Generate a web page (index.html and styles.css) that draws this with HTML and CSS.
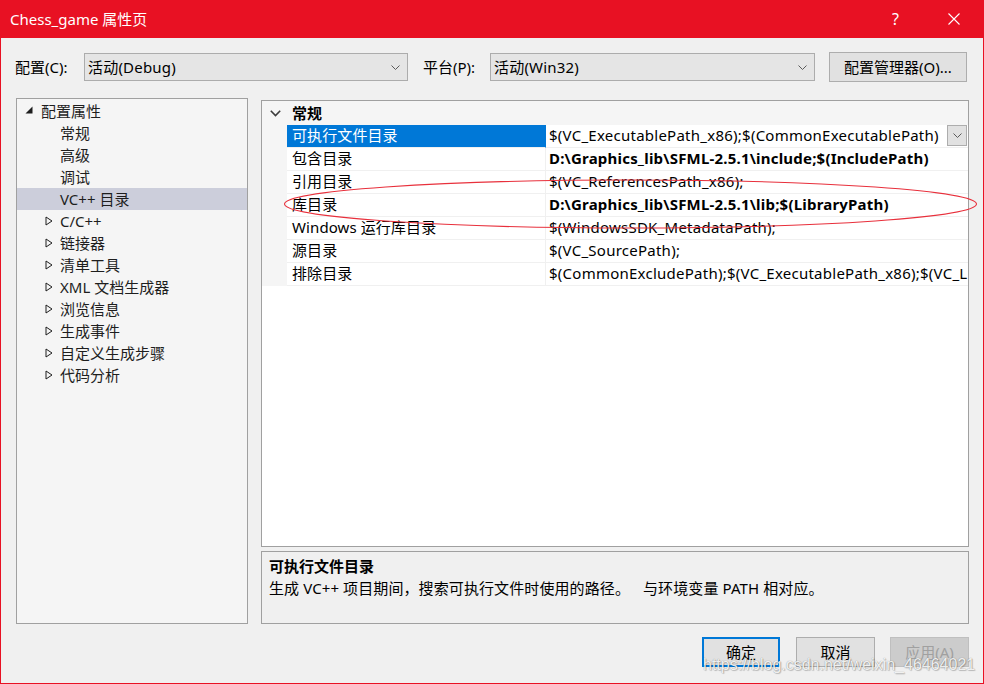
FILE: index.html
```html
<!DOCTYPE html>
<html lang="zh-CN">
<head>
<meta charset="utf-8">
<title>Chess_game 属性页</title>
<link rel="stylesheet" href="styles.css">
</head>
<body>
<div class="window">
  <div class="titlebar">
    <span class="title">Chess_game 属性页</span>
    <span class="help">?</span>
    <svg class="close" width="12" height="12" viewBox="0 0 12 12"><path d="M0.5 0.5L11.5 11.5M11.5 0.5L0.5 11.5" stroke="#ffffff" stroke-width="1.1" fill="none"/></svg>
  </div>

  <div class="config-row">
    <span class="lbl lbl-config">配置(C):</span>
    <div class="combo combo-config">
      <span class="combo-text">活动(Debug)</span>
      <svg class="chev" width="9" height="5" viewBox="0 0 9 5"><path d="M0.5 0.5L4.5 4.5L8.5 0.5" stroke="#5a5a5a" stroke-width="1" fill="none"/></svg>
    </div>
    <span class="lbl lbl-platform">平台(P):</span>
    <div class="combo combo-platform">
      <span class="combo-text">活动(Win32)</span>
      <svg class="chev" width="9" height="5" viewBox="0 0 9 5"><path d="M0.5 0.5L4.5 4.5L8.5 0.5" stroke="#5a5a5a" stroke-width="1" fill="none"/></svg>
    </div>
    <button class="btn btn-manager">配置管理器(O)...</button>
  </div>

  <div class="main">
    <div class="tree">
      <div class="tree-row root">
        <svg class="tri-open" width="8" height="8" viewBox="0 0 8 8"><polygon points="7.5,0.5 7.5,7.5 0.5,7.5" fill="#1e1e1e"/></svg>
        <span>配置属性</span>
      </div>
      <div class="tree-row child">常规</div>
      <div class="tree-row child">高级</div>
      <div class="tree-row child">调试</div>
      <div class="tree-row child selected">VC++ 目录</div>
      <div class="tree-row node"><svg class="tri" width="8" height="10" viewBox="0 0 8 10"><polygon points="1,1 1,9 7,5" fill="none" stroke="#1e1e1e" stroke-width="1"/></svg><span>C/C++</span></div>
      <div class="tree-row node"><svg class="tri" width="8" height="10" viewBox="0 0 8 10"><polygon points="1,1 1,9 7,5" fill="none" stroke="#1e1e1e" stroke-width="1"/></svg><span>链接器</span></div>
      <div class="tree-row node"><svg class="tri" width="8" height="10" viewBox="0 0 8 10"><polygon points="1,1 1,9 7,5" fill="none" stroke="#1e1e1e" stroke-width="1"/></svg><span>清单工具</span></div>
      <div class="tree-row node"><svg class="tri" width="8" height="10" viewBox="0 0 8 10"><polygon points="1,1 1,9 7,5" fill="none" stroke="#1e1e1e" stroke-width="1"/></svg><span>XML 文档生成器</span></div>
      <div class="tree-row node"><svg class="tri" width="8" height="10" viewBox="0 0 8 10"><polygon points="1,1 1,9 7,5" fill="none" stroke="#1e1e1e" stroke-width="1"/></svg><span>浏览信息</span></div>
      <div class="tree-row node"><svg class="tri" width="8" height="10" viewBox="0 0 8 10"><polygon points="1,1 1,9 7,5" fill="none" stroke="#1e1e1e" stroke-width="1"/></svg><span>生成事件</span></div>
      <div class="tree-row node"><svg class="tri" width="8" height="10" viewBox="0 0 8 10"><polygon points="1,1 1,9 7,5" fill="none" stroke="#1e1e1e" stroke-width="1"/></svg><span>自定义生成步骤</span></div>
      <div class="tree-row node"><svg class="tri" width="8" height="10" viewBox="0 0 8 10"><polygon points="1,1 1,9 7,5" fill="none" stroke="#1e1e1e" stroke-width="1"/></svg><span>代码分析</span></div>
    </div>

    <div class="right">
      <div class="grid">
        <div class="grid-head">
          <div class="gutter"><svg class="head-chev" width="11" height="7" viewBox="0 0 11 7"><path d="M0.8 0.8L5.5 5.5L10.2 0.8" stroke="#3c3c3c" stroke-width="1.6" fill="none"/></svg></div>
          <div class="head-text">常规</div>
        </div>
        <div class="grid-row">
          <div class="gutter"></div>
          <div class="cell-name sel">可执行文件目录</div>
          <div class="cell-val"><span class="val-text">$(VC_ExecutablePath_x86);$(CommonExecutablePath)</span>
            <div class="drop"><svg width="9" height="5" viewBox="0 0 9 5"><path d="M0.5 0.5L4.5 4.5L8.5 0.5" stroke="#5a5a5a" stroke-width="1" fill="none"/></svg></div>
          </div>
        </div>
        <div class="grid-row">
          <div class="gutter"></div>
          <div class="cell-name">包含目录</div>
          <div class="cell-val bold"><span class="val-text">D:\Graphics_lib\SFML-2.5.1\include;$(IncludePath)</span></div>
        </div>
        <div class="grid-row">
          <div class="gutter"></div>
          <div class="cell-name">引用目录</div>
          <div class="cell-val"><span class="val-text">$(VC_ReferencesPath_x86);</span></div>
        </div>
        <div class="grid-row">
          <div class="gutter"></div>
          <div class="cell-name">库目录</div>
          <div class="cell-val bold"><span class="val-text">D:\Graphics_lib\SFML-2.5.1\lib;$(LibraryPath)</span></div>
        </div>
        <div class="grid-row">
          <div class="gutter"></div>
          <div class="cell-name">Windows 运行库目录</div>
          <div class="cell-val"><span class="val-text">$(WindowsSDK_MetadataPath);</span></div>
        </div>
        <div class="grid-row">
          <div class="gutter"></div>
          <div class="cell-name">源目录</div>
          <div class="cell-val"><span class="val-text">$(VC_SourcePath);</span></div>
        </div>
        <div class="grid-row">
          <div class="gutter"></div>
          <div class="cell-name">排除目录</div>
          <div class="cell-val"><span class="val-text">$(CommonExcludePath);$(VC_ExecutablePath_x86);$(VC_LibraryPath_x86)</span></div>
        </div>
      </div>
      <div class="desc">
        <div class="desc-title">可执行文件目录</div>
        <div class="desc-text">生成 VC++ 项目期间，搜索可执行文件时使用的路径。<span class="gap"></span>与环境变量 PATH 相对应。</div>
      </div>
    </div>
  </div>

  <div class="buttons">
    <button class="btn btn-ok">确定</button>
    <button class="btn btn-cancel">取消</button>
    <button class="btn btn-apply" disabled>应用(A)</button>
  </div>

  <svg class="annotation" width="984" height="684" viewBox="0 0 984 684"><ellipse cx="630.5" cy="204" rx="346" ry="24" fill="none" stroke="#e8303c" stroke-width="1.1"/></svg>
  <div class="watermark">https://blog.csdn.net/weixin_46464021</div>
</div>
</body>
</html>
```

FILE: styles.css
```css
* { box-sizing: border-box; }

html, body {
  margin: 0;
  padding: 0;
  width: 984px;
  height: 684px;
  overflow: hidden;
  background: #f0f0f0;
}

body {
  font-family: "Noto Sans", "Noto Sans CJK SC", sans-serif;
  font-size: 15px;
  color: #000;
}

.window {
  position: relative;
  width: 984px;
  height: 684px;
  border: 1px solid #e81123;
  border-top: none;
  background: #f0f0f0;
  display: flex;
  flex-direction: column;
}

/* title bar */
.titlebar {
  height: 38px;
  flex: none;
  background: #e81123;
  color: #fff;
  display: flex;
  align-items: center;
  padding-left: 9px;
  padding-right: 23px;
}
.title {
  font-size: 15px;
  line-height: 20px;
}
.help {
  margin-left: auto;
  font-size: 16px;
  line-height: 20px;
}
.close {
  margin-left: 49px;
  display: block;
}

/* configuration row */
.config-row {
  margin-top: 14px;
  height: 30px;
  flex: none;
  display: flex;
  align-items: center;
  padding-left: 14px;
}
.lbl {
  line-height: 20px;
  white-space: nowrap;
}
.lbl-config { width: 69px; }
.lbl-platform { width: 67px; margin-left: 15px; }
.combo {
  height: 28px;
  border: 1px solid #acacac;
  background: #e5e5e5;
  display: flex;
  align-items: center;
  padding-left: 3px;
  padding-right: 7px;
}
.combo-config { width: 324px; }
.combo-platform { width: 325px; }
.combo-text { line-height: 20px; letter-spacing: 0.2px; }
.chev { margin-left: auto; display: block; }

.btn {
  font-family: inherit;
  font-size: 15px;
  color: #000;
  background: #e1e1e1;
  border: 1px solid #adadad;
  height: 30px;
  padding: 0;
  line-height: 20px;
}
.btn-manager {
  width: 138px;
  margin-left: 14px;
}

/* main */
.main {
  margin-top: 16px;
  height: 526px;
  flex: none;
  display: flex;
  padding-left: 15px;
}

.tree {
  width: 232px;
  height: 526px;
  border: 1px solid #a0a0a0;
  background: #f5f5f5;
  padding-top: 1px;
  color: #1e1e1e;
}
.tree-row {
  height: 22px;
  display: flex;
  align-items: center;
  line-height: 20px;
  white-space: nowrap;
}
.tree-row.root { padding-left: 8px; }
.tree-row.root .tri-open { display: block; margin-right: 8px; margin-top: -2px; }
.tree-row.child { padding-left: 43px; }
.tree-row.node { padding-left: 28px; }
.tree-row.node .tri { display: block; margin-right: 7px; }
.tree-row.selected { background: #cccedb; }

.right {
  margin-left: 13px;
  width: 708px;
  display: flex;
  flex-direction: column;
}

.grid {
  margin-top: 2px;
  height: 447px;
  border: 1px solid #a0a0a0;
  background: #fff;
  display: flex;
  flex-direction: column;
  overflow: hidden;
}
.gutter {
  width: 25px;
  flex: none;
  background: #f5f5f5;
  align-self: stretch;
}
.grid-head {
  height: 24px;
  display: flex;
  align-items: center;
  background: #f5f5f5;
}
.grid-head .gutter {
  display: flex;
  align-items: center;
  padding-left: 8px;
}
.head-chev { display: block; margin-top: 1px; }
.head-text {
  padding-left: 5px;
  font-weight: bold;
  line-height: 20px;
}
.grid-row {
  height: 23px;
  display: flex;
  flex: none;
}
.cell-name {
  width: 259px;
  flex: none;
  padding-left: 5px;
  border-bottom: 1px solid #f0f0f0;
  border-right: 1px solid #f0f0f0;
  line-height: 21px;
  white-space: nowrap;
  overflow: hidden;
  letter-spacing: 0.1px;
}
.cell-name.sel {
  background: #0078d7;
  color: #fff;
  border-right-color: #0078d7;
}
.cell-val {
  flex: 1;
  min-width: 0;
  padding-left: 3px;
  border-bottom: 1px solid #f0f0f0;
  display: flex;
  align-items: flex-start;
  overflow: hidden;
  white-space: nowrap;
}
.val-text { line-height: 21px; letter-spacing: 0.25px; }
.cell-val.bold .val-text { font-weight: bold; letter-spacing: 0.2px; }
.drop {
  margin-left: auto;
  margin-right: 1px;
  width: 20px;
  height: 21px;
  flex: none;
  border: 1px solid #adadad;
  background: #e1e1e1;
  display: flex;
  align-items: center;
  justify-content: center;
}
.drop svg { display: block; }

.desc {
  margin-top: 4px;
  height: 73px;
  border: 1px solid #a0a0a0;
  background: #f0f0f0;
  padding: 4px 7px 0;
}
.desc-title {
  font-weight: bold;
  line-height: 20px;
}
.desc-text {
  margin-top: 2px;
  line-height: 20px;
  white-space: nowrap;
  letter-spacing: 0.1px;
}
.gap {
  display: inline-block;
  width: 13px;
}

/* bottom buttons */
.buttons {
  margin-top: 13px;
  height: 30px;
  flex: none;
  display: flex;
  justify-content: flex-end;
  padding-right: 14px;
}
.buttons .btn { width: 79px; }
.btn-ok {
  border: 2px solid #0078d7;
  width: 78px !important;
}
.btn-cancel { margin-left: 16px; }
.btn-apply {
  margin-left: 15px;
  background: #cccccc;
  border-color: #bfbfbf;
  color: #a0a0a0;
}

/* overlays */
.annotation {
  position: absolute;
  left: -1px;
  top: 0;
  pointer-events: none;
}
.watermark {
  position: absolute;
  left: 702px;
  top: 655px;
  font-family: "Liberation Sans", sans-serif;
  font-size: 16px;
  line-height: 20px;
  color: rgba(255, 255, 255, 0.9);
  text-shadow: 0 0 1px rgba(0, 0, 0, 0.45), 1px 1px 1px rgba(0, 0, 0, 0.2);
  white-space: nowrap;
  pointer-events: none;
}
```
